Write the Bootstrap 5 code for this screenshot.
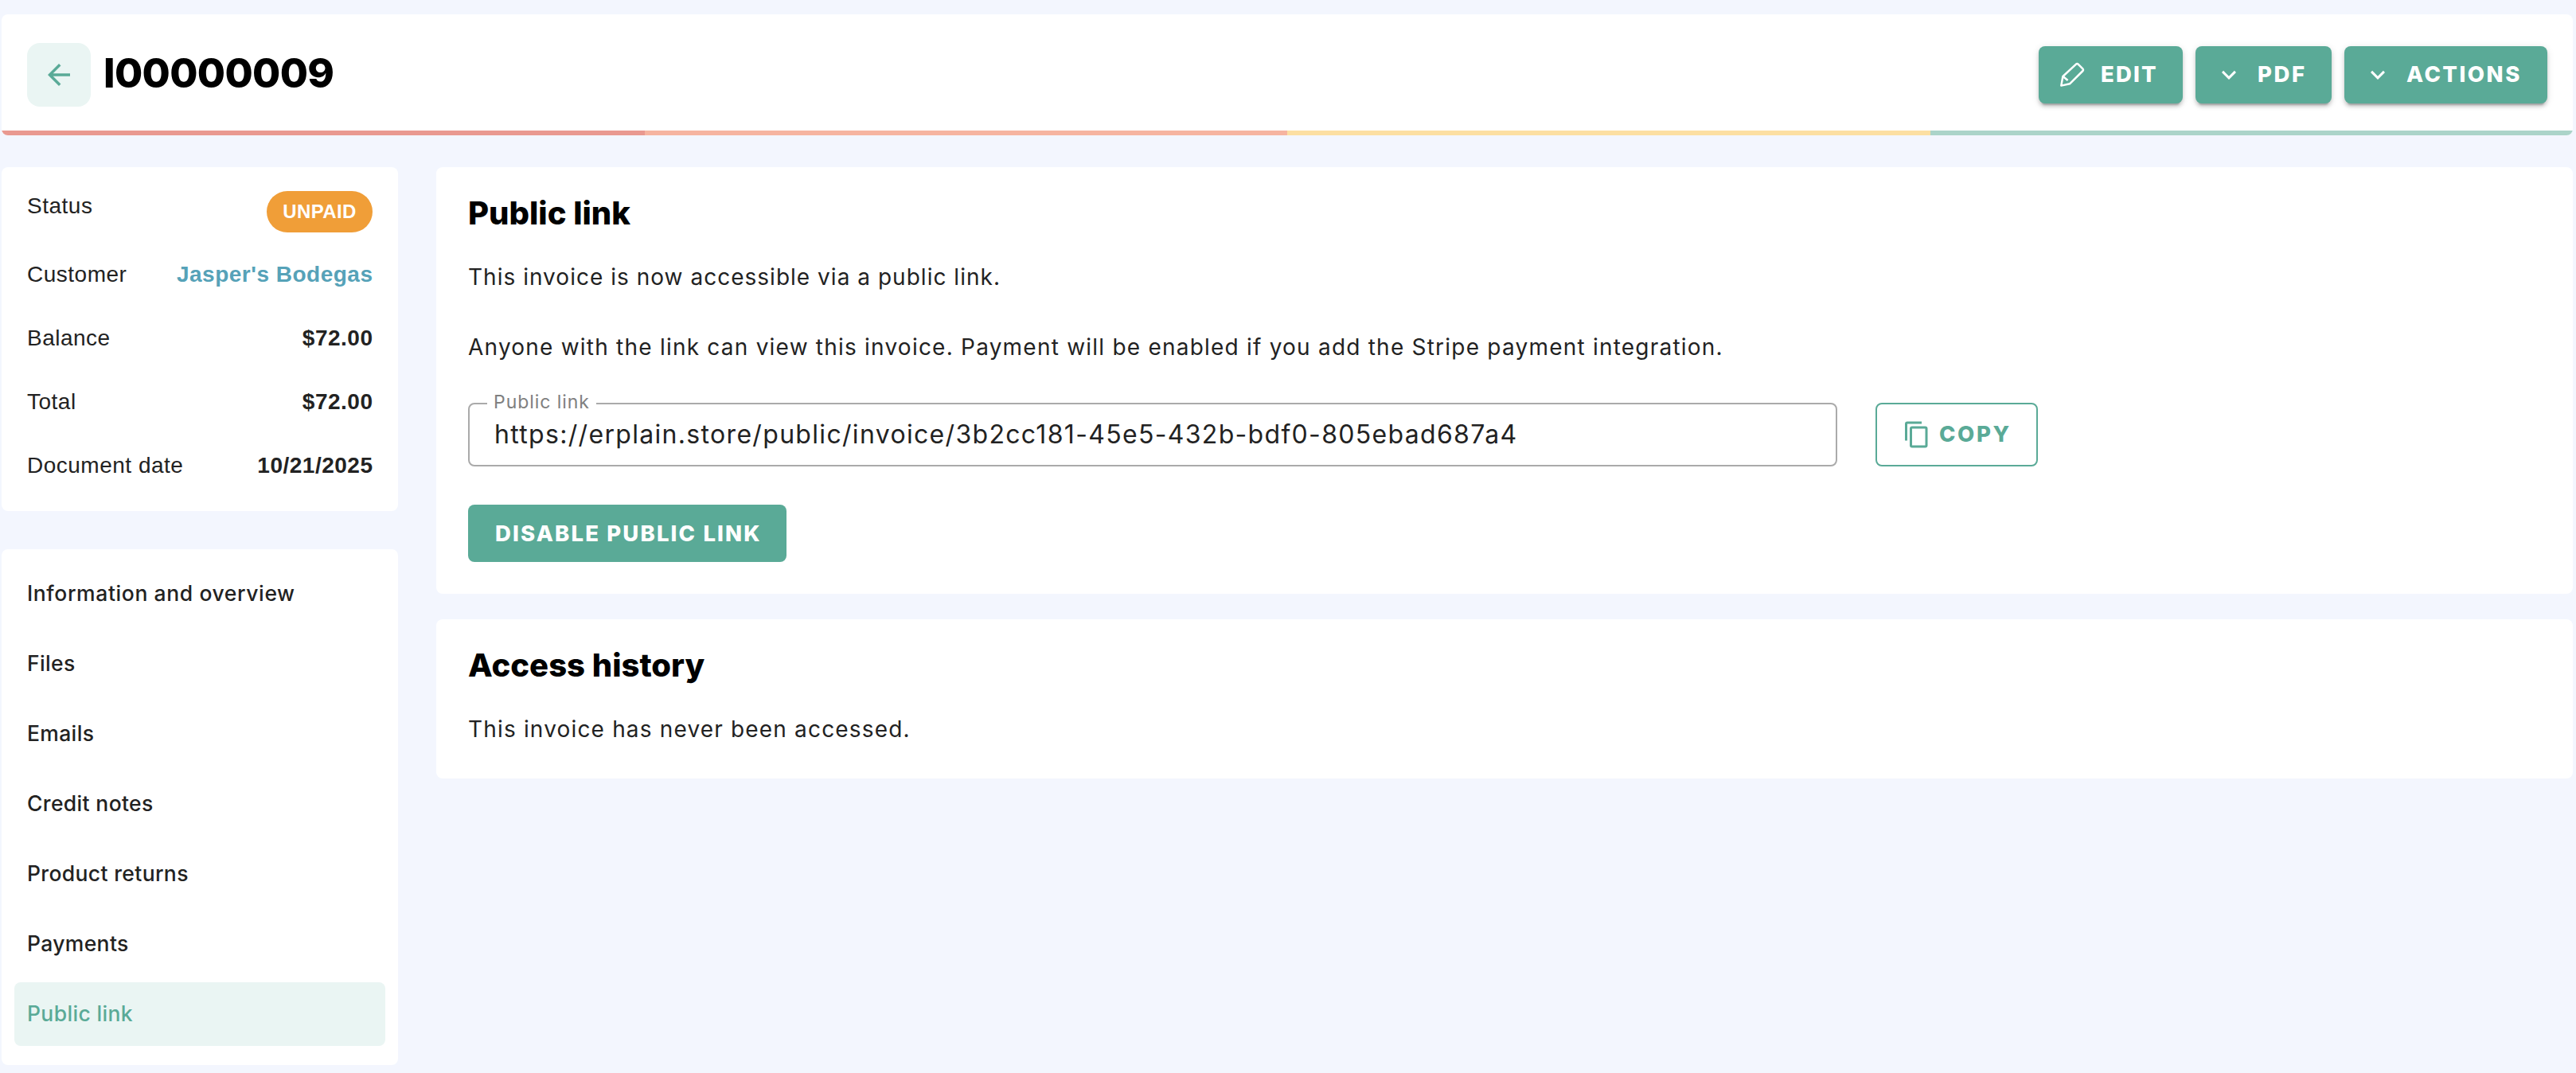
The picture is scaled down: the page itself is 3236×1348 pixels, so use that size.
<!DOCTYPE html>
<html lang="en">
<head>
  <meta charset="UTF-8">
  <meta name="viewport" content="width=device-width, initial-scale=1.0">
  <title>I00000009</title>
  <link href="https://cdn.jsdelivr.net/npm/bootstrap@5.3.0/dist/css/bootstrap.min.css" rel="stylesheet">
  <style>
    body {
      background-color: #f3f6fe;
      color: #222;
      font-family: Inter, "Open Sans", sans-serif;
      font-size: 28px;
      padding: 18px 4px 0 2px;
    }
    .panel {
      background-color: #fff;
      border-radius: 8px;
    }

    /* header */
    .page-head {
      overflow: hidden;
      margin-bottom: 40px;
    }
    .head-row {
      height: 146px;
      padding: 6px 32px 0;
    }
    .back-btn {
      width: 80px;
      height: 80px;
      border-radius: 16px;
      background-color: #eaf5f3;
      color: #5aaa97;
    }
    .doc-title {
      margin: 0 0 0 16px;
      padding-bottom: 5px;
      color: #000;
      font-size: 51px;
      font-weight: 800;
      line-height: 80px;
      letter-spacing: -.65px;
    }
    .strip {
      height: 6px;
    }
    .strip-1 { background-color: #e99990; }
    .strip-2 { background-color: #f6b4a0; }
    .strip-3 { background-color: #fcdfa2; }
    .strip-4 { background-color: #abd4c9; }

    /* buttons */
    .btn-green, .btn-copy {
      height: 72px;
      padding: 0;
      border: 0;
      border-radius: 8px;
      font-size: 27.5px;
      font-weight: 800;
      line-height: 70px;
      white-space: nowrap;
    }
    .btn-green, .btn-green:hover {
      background-color: #5aaa97;
      color: #fff;
    }
    .btn-top {
      padding-left: 24px;
      box-shadow: 0 6px 2px -4px rgba(0, 0, 0, .2), 0 4px 4px rgba(0, 0, 0, .14), 0 2px 10px rgba(0, 0, 0, .12);
    }
    .btn-top span {
      margin-left: 18px;
      padding-bottom: 2px;
    }
    .btn-edit { width: 181px; letter-spacing: 2.2px; }
    .btn-pdf { width: 171px; letter-spacing: 2.6px; }
    .btn-actions { width: 255px; letter-spacing: 2.5px; }
    .btn-copy, .btn-copy:hover {
      width: 204px;
      height: 80px;
      padding-left: 32px;
      border: 2px solid #5aaa97;
      color: #5aaa97;
      letter-spacing: 2.6px;
    }
    .btn-copy span {
      margin-left: 10px;
      padding-bottom: 2px;
    }
    .btn-disable {
      width: 400px;
      padding-left: 34px;
      letter-spacing: 2.15px;
      text-align: left;
    }

    /* sidebar */
    .layout { gap: 48px; }
    .side { width: 498px; }
    .summary {
      padding: 30px 32px 38px 32px;
      font-family: "Liberation Sans", Arial, sans-serif;
      font-size: 28px;
      line-height: 38px;
      letter-spacing: .5px;
    }
    .summary-row + .summary-row { margin-top: 42px; }
    .summary-row:nth-child(2) { margin-top: 34px; }
    .summary-row strong {
      margin-right: -.5px;
      letter-spacing: .5px;
    }
    .customer-link { color: #56a2b8; }
    .status-pill {
      width: 133px;
      height: 52px;
      border-radius: 26px;
      background-color: #f09e38;
      color: #fff;
      font-size: 24px;
      font-weight: 700;
      line-height: 51px;
      letter-spacing: .4px;
      text-align: center;
    }
    .side-menu {
      gap: 8px;
      margin-top: 48px;
      padding: 16px 16px 24px;
    }
    .side-menu .nav-link {
      height: 80px;
      padding: 0 16px;
      border-radius: 8px;
      color: #222;
      font-size: 26.5px;
      font-weight: 500;
      line-height: 79px;
      letter-spacing: .35px;
    }
    .side-menu .nav-link:first-child { letter-spacing: .6px; }
    .side-menu .nav-link.active {
      background-color: #eaf5f3;
      color: #5aaa97;
    }

    /* content */
    .content-box { padding: 34px 40px 40px; }
    .content-box h2 {
      margin: 0 0 35px;
      color: #000;
      font-size: 40px;
      font-weight: 800;
      line-height: 48px;
    }
    .content-box p {
      margin: 0 0 44px;
      line-height: 43px;
      padding-bottom: 1px;
      letter-spacing: 1.02px;
    }
    .content-box .pay-note { letter-spacing: 1.22px; }
    .link-row {
      gap: 48px;
      margin: 47px 0 48px;
    }
    .link-field {
      width: 1720px;
      height: 80px;
      padding-left: 31px;
      border: 2px solid #aaa;
      border-radius: 8px;
      font-size: 32px;
      line-height: 75px;
      letter-spacing: 1.32px;
    }
    .link-field label {
      top: -14px;
      left: 22px;
      width: 137px;
      padding-left: 8px;
      background-color: #fff;
      color: #808080;
      font-size: 23px;
      line-height: 23px;
      letter-spacing: .95px;
    }
    .history { margin-top: 32px; }
    .history p {
      margin-bottom: -1px;
      letter-spacing: 1.17px;
    }
  </style>
</head>
<body>
  <header class="panel page-head">
    <div class="head-row d-flex align-items-center">
      <a href="#" class="back-btn d-flex align-items-center justify-content-center" aria-label="Back">
        <svg width="42" height="42" viewBox="0 0 24 24" fill="currentColor"><path d="M20 11H7.83l5.59-5.59L12 4l-8 8 8 8 1.41-1.41L7.83 13H20z"/></svg>
      </a>
      <h1 class="doc-title">I00000009</h1>
      <div class="d-flex gap-3 ms-auto">
        <button class="btn btn-green btn-top btn-edit d-flex align-items-center">
          <svg width="36" height="36" viewBox="0 0 36 36" fill="none" stroke="#fff" stroke-width="2.5" stroke-linejoin="round"><path d="M4.3 31.6 6.4 20 23 4.6Q24.4 3.6 25.6 4.7l6 6Q32.5 12 31.5 13L15 29.3zM6.6 20l6 5"/></svg>
          <span>EDIT</span>
        </button>
        <button class="btn btn-green btn-top btn-pdf d-flex align-items-center">
          <svg width="36" height="36" viewBox="0 0 24 24" fill="currentColor"><path d="M7.41 8.58 12 13.17l4.59-4.59L18 10l-6 6-6-6z"/></svg>
          <span>PDF</span>
        </button>
        <button class="btn btn-green btn-top btn-actions d-flex align-items-center">
          <svg width="36" height="36" viewBox="0 0 24 24" fill="currentColor"><path d="M7.41 8.58 12 13.17l4.59-4.59L18 10l-6 6-6-6z"/></svg>
          <span>ACTIONS</span>
        </button>
      </div>
    </div>
    <div class="d-flex">
      <div class="strip strip-1 w-25"></div>
      <div class="strip strip-2 w-25"></div>
      <div class="strip strip-3 w-25"></div>
      <div class="strip strip-4 w-25"></div>
    </div>
  </header>

  <div class="layout d-flex align-items-start">
    <aside class="side flex-shrink-0">
      <div class="panel summary">
        <div class="summary-row d-flex justify-content-between"><span>Status</span><span class="status-pill">UNPAID</span></div>
        <div class="summary-row d-flex justify-content-between"><span>Customer</span><strong class="customer-link">Jasper's Bodegas</strong></div>
        <div class="summary-row d-flex justify-content-between"><span>Balance</span><strong>$72.00</strong></div>
        <div class="summary-row d-flex justify-content-between"><span>Total</span><strong>$72.00</strong></div>
        <div class="summary-row d-flex justify-content-between"><span>Document date</span><strong>10/21/2025</strong></div>
      </div>
      <nav class="panel side-menu nav flex-column">
        <a class="nav-link" href="#">Information and overview</a>
        <a class="nav-link" href="#">Files</a>
        <a class="nav-link" href="#">Emails</a>
        <a class="nav-link" href="#">Credit notes</a>
        <a class="nav-link" href="#">Product returns</a>
        <a class="nav-link" href="#">Payments</a>
        <a class="nav-link active" href="#">Public link</a>
      </nav>
    </aside>

    <main class="flex-grow-1">
      <section class="panel content-box">
        <h2>Public link</h2>
        <p>This invoice is now accessible via a public link.</p>
        <p class="pay-note">Anyone with the link can view this invoice. Payment will be enabled if you add the Stripe payment integration.</p>
        <div class="link-row d-flex">
          <div class="link-field position-relative">
            <label class="position-absolute">Public link</label>
            https://erplain.store/public/invoice/3b2cc181-45e5-432b-bdf0-805ebad687a4
          </div>
          <button class="btn btn-copy d-flex align-items-center">
            <svg width="36" height="36" viewBox="0 0 24 24" fill="currentColor"><path d="M19 21H8V7h11m0-2H8a2 2 0 0 0-2 2v14a2 2 0 0 0 2 2h11a2 2 0 0 0 2-2V7a2 2 0 0 0-2-2m-3-4H4a2 2 0 0 0-2 2v14h2V3h12z"/></svg>
            <span>COPY</span>
          </button>
        </div>
        <button class="btn btn-green btn-disable d-block">DISABLE PUBLIC LINK</button>
      </section>

      <section class="panel content-box history">
        <h2>Access history</h2>
        <p>This invoice has never been accessed.</p>
      </section>
    </main>
  </div>
  <script src="https://cdn.jsdelivr.net/npm/bootstrap@5.3.0/dist/js/bootstrap.bundle.min.js"></script>
</body>
</html>
